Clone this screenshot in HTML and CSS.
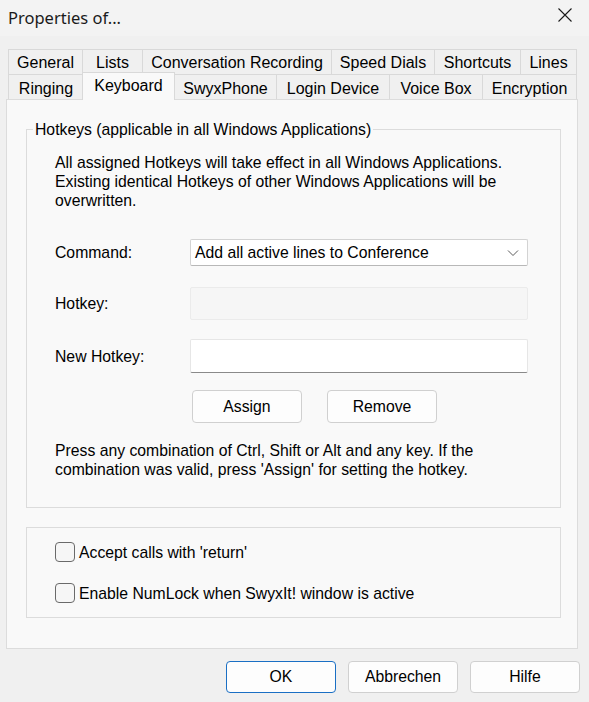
FILE: index.html
```html
<!DOCTYPE html>
<html lang="en">
<head>
<meta charset="utf-8">
<title>Properties of...</title>
<link rel="stylesheet" href="styles.css">
</head>
<body>
<div class="window">
  <header class="titlebar">
    <span class="title">Properties of...</span>
    <span class="close" aria-label="Close">
      <svg width="16" height="16" viewBox="0 0 16 16"><path d="M1.5 1.5 L14.5 14.5 M14.5 1.5 L1.5 14.5" stroke="#1b1b1b" stroke-width="1.1" fill="none"/></svg>
    </span>
  </header>

  <div class="content">
    <nav class="tabs">
      <div class="tabrow row-top">
        <div class="tab">General</div>
        <div class="tab">Lists</div>
        <div class="tab">Conversation Recording</div>
        <div class="tab">Speed Dials</div>
        <div class="tab">Shortcuts</div>
        <div class="tab last">Lines</div>
      </div>
      <div class="tabrow row-bottom">
        <div class="tab">Ringing</div>
        <div class="tab selected">Keyboard</div>
        <div class="tab">SwyxPhone</div>
        <div class="tab">Login Device</div>
        <div class="tab">Voice Box</div>
        <div class="tab last">Encryption</div>
      </div>
    </nav>

    <section class="panel">
      <fieldset class="group hotkeys">
        <legend>Hotkeys (applicable in all Windows Applications)</legend>
        <div class="group-body">
          <p class="note intro">All assigned Hotkeys will take effect in all Windows Applications. Existing identical Hotkeys of other Windows Applications will be overwritten.</p>

          <div class="row row-command">
            <span class="label">Command:</span>
            <div class="select">
              <span>Add all active lines to Conference</span>
              <svg class="chevron" width="12" height="8" viewBox="0 0 12 8"><path d="M1 1.5 L6 6.5 L11 1.5" stroke="#5a5a5a" stroke-width="1" fill="none"/></svg>
            </div>
          </div>
          <div class="row row-hotkey">
            <span class="label">Hotkey:</span>
            <div class="field disabled"></div>
          </div>
          <div class="row row-new">
            <span class="label">New Hotkey:</span>
            <div class="field input"></div>
          </div>
          <div class="row row-actions">
            <span class="label"></span>
            <div class="actions">
              <button class="btn small">Assign</button>
              <button class="btn small">Remove</button>
            </div>
          </div>

          <p class="note outro">Press any combination of Ctrl, Shift or Alt and any key. If the combination was valid, press 'Assign' for setting the hotkey.</p>
        </div>
      </fieldset>

      <div class="group options">
        <label class="check"><span class="box"></span>Accept calls with 'return'</label>
        <label class="check second"><span class="box"></span>Enable NumLock when SwyxIt! window is active</label>
      </div>
    </section>

    <footer class="buttons">
      <button class="btn dialog default">OK</button>
      <button class="btn dialog">Abbrechen</button>
      <button class="btn dialog">Hilfe</button>
    </footer>
  </div>
</div>
</body>
</html>
```

FILE: styles.css
```css
* {
  box-sizing: border-box;
}

html, body {
  margin: 0;
  padding: 0;
}

body {
  width: 589px;
  height: 702px;
  overflow: hidden;
  background: #f0f0f0;
  font-family: "Liberation Sans", Arial, sans-serif;
  font-size: 15.75px;
  line-height: 19px;
  color: #000;
}

.window {
  width: 589px;
  height: 702px;
  display: flex;
  flex-direction: column;
}

/* Title bar */
.titlebar {
  height: 36px;
  background: #f3f3f3;
  display: flex;
  align-items: center;
  justify-content: space-between;
  padding: 0 16px 0 8px;
}

.title {
  font-family: "Noto Sans", "Open Sans", sans-serif;
  font-size: 16.5px;
  color: #1a1a1a;
  position: relative;
  top: -1px;
}

.close {
  display: flex;
  width: 16px;
  height: 16px;
  position: relative;
  top: -3px;
}

.content {
  padding: 13px 11px 0 6px;
}

/* Tabs */
.tabs {
  padding: 0 2px;
  font-size: 16px;
}

.tabrow {
  display: grid;
  height: 25px;
}

.row-top {
  grid-template-columns: 74px 60px 189px 103px 86px 57px;
}

.row-bottom {
  grid-template-columns: 75px 91px 102px 113px 93px 95px;
}

.tab {
  display: flex;
  align-items: center;
  justify-content: center;
  border-top: 1px solid #d9d9d9;
  border-left: 1px solid #d9d9d9;
  background: #f0f0f0;
  white-space: nowrap;
  padding-top: 1px;
}

.tab.last {
  border-right: 1px solid #d9d9d9;
}

.row-bottom .tab {
  padding-top: 3px;
}

.tab.selected {
  position: relative;
  z-index: 1;
  margin: -2px -1px -1px -1px;
  border-right: 1px solid #d9d9d9;
  background: #f9f9f9;
  padding-top: 0;
  padding-bottom: 2px;
}

/* Page panel */
.panel {
  background: #f9f9f9;
  border: 1px solid #dcdcdc;
  height: 550px;
  padding: 0 16px 0 19px;
  display: flex;
  flex-direction: column;
}

.group {
  border: 1px solid #dcdcdc;
  margin: 0;
}

.hotkeys {
  margin-top: 20px;
  padding: 0;
  min-width: 0;
}

.hotkeys legend {
  padding: 0 2px;
  margin-left: 6px;
  line-height: 19px;
}

.group-body {
  padding: 0 21px 28px 28px;
}

.note {
  margin: 0;
}

.intro {
  margin-top: 14px;
}

.row {
  display: flex;
  align-items: center;
}

.label {
  width: 135px;
  flex: none;
}

.row-command {
  margin-top: 29px;
  height: 27px;
}

.row-hotkey {
  margin-top: 21px;
  height: 33px;
}

.row-new {
  margin-top: 19px;
  height: 34px;
}

.row-actions {
  margin-top: 17px;
  height: 33px;
}

.select {
  width: 338px;
  height: 27px;
  background: #fff;
  border: 1px solid #d3d3d3;
  border-bottom-color: #b8b8b8;
  border-radius: 2px;
  display: flex;
  align-items: center;
  justify-content: space-between;
  padding: 0 8px 0 4px;
}

.chevron {
  flex: none;
}

.field {
  width: 338px;
  height: 100%;
  border-radius: 2px;
}

.field.disabled {
  background: #f6f6f6;
  border: 1px solid #ebebeb;
}

.field.input {
  background: #fff;
  border: 1px solid #e6e6e6;
  border-bottom: 1px solid #8a8a8a;
}

.actions {
  display: flex;
  gap: 25px;
  padding-left: 2px;
}

.btn {
  font-family: "Liberation Sans", Arial, sans-serif;
  font-size: 15.75px;
  color: #000;
  background: #fdfdfd;
  border: 1px solid #d0d0d0;
  border-radius: 4px;
  padding: 0;
}

.btn.small {
  width: 110px;
  height: 33px;
}

.outro {
  margin-top: 18px;
}

/* Options group */
.options {
  margin-top: 19px;
  padding: 14px 0 14px 28px;
  display: flex;
  flex-direction: column;
  gap: 21px;
}

.check {
  display: flex;
  align-items: center;
  gap: 4px;
  height: 20px;
}

.box {
  width: 20px;
  height: 20px;
  border: 1px solid #6a6a6a;
  border-radius: 4px;
  background: #f6f6f6;
}

/* Dialog buttons */
.buttons {
  display: flex;
  justify-content: flex-end;
  gap: 12px;
  margin-top: 12px;
  margin-right: -2px;
}

.btn.dialog {
  width: 110px;
  height: 32px;
}

.btn.default {
  border-color: #1a6fc4;
}
```
